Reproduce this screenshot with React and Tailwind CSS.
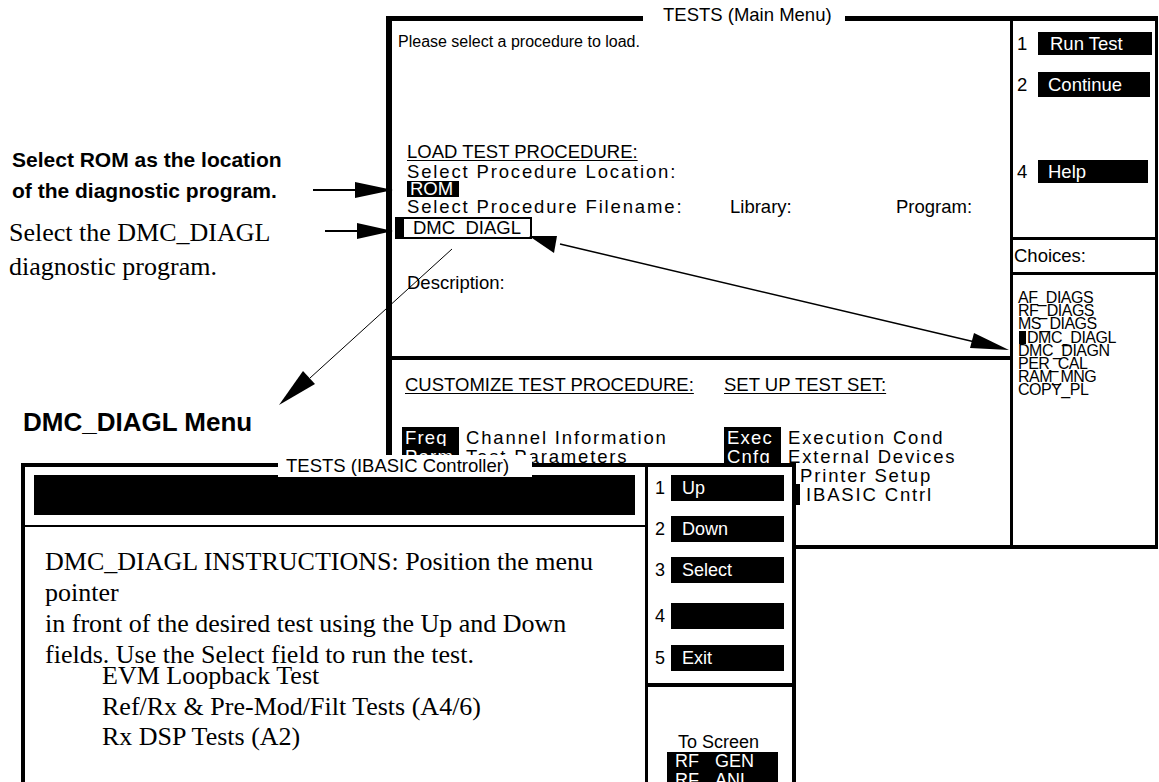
import React from 'react'

const SANS = "font-['Liberation_Sans',Arial,sans-serif]"
const SERIF = "font-['Liberation_Serif','Times_New_Roman',serif]"

const choices = ['AF_DIAGS', 'RF_DIAGS', 'MS_DIAGS', 'DMC_DIAGL', 'DMC_DIAGN', 'PER_CAL', 'RAM_MNG', 'COPY_PL']

const Label = ({ children, wide }) => (
  <span
    className={`${wide ? 'w-[76px]' : 'w-[57px]'} h-[21px] shrink-0 bg-black text-white pl-[3px] leading-[21px] tracking-[1.2px]`}
  >
    {children}
  </span>
)

const Row = ({ label, text, wide, gap = 'ml-[7px]' }) => (
  <div className="h-[19px] flex items-center">
    <Label wide={wide}>{label}</Label>
    <span className={`${gap} tracking-[1.85px] whitespace-nowrap`}>{text}</span>
  </div>
)

const MainMenu = () => (
  <div className="absolute left-[386px] top-[16px] w-[772px] h-[533px] border-l-[6px] border-t-[5px] border-r-[3px] border-b-[4px] border-black flex text-[18.5px]">
    <div className="w-[618px] flex flex-col">
      {/* load section */}
      <div className="h-[339px] shrink-0 border-b-4 border-black flex flex-col pl-[15px]">
        <p className="-ml-[9px] mt-[11px] text-[16px] leading-[20px]">Please select a procedure to load.</p>
        <p className="mt-[90px] leading-[20px]">
          <span className="underline underline-offset-2 decoration-1">LOAD TEST PROCEDURE:</span>
        </p>
        <p className="leading-[20px] tracking-[1.85px]">Select Procedure Location:</p>
        <div className="-mt-[1px] h-[16px] w-[52px] bg-black text-white leading-[16px] pl-[3px]">ROM</div>
        <div className="flex leading-[19px]">
          <span className="w-[323px] tracking-[1.85px] whitespace-nowrap">Select Procedure Filename:</span>
          <span className="w-[166px]">Library:</span>
          <span>Program:</span>
        </div>
        <div className="mt-[1px] -ml-[12px] w-[137px] h-[22px] flex border-2 border-black">
          <div className="w-[7px] bg-black" />
          <span className="ml-[9px] leading-[18px]">DMC_DIAGL</span>
        </div>
        <p className="mt-[34px] leading-[20px]">Description:</p>
      </div>
      {/* customize section */}
      <div className="flex-1 flex flex-col pt-[14px]">
        <div className="flex leading-[22px]">
          <span className="ml-[13px] w-[319px]">
            <span className="underline underline-offset-2 decoration-1">CUSTOMIZE TEST PROCEDURE:</span>
          </span>
          <span className="underline underline-offset-2 decoration-1">SET UP TEST SET:</span>
        </div>
        <div className="mt-[32px] flex">
          <div className="ml-[10px] w-[322px] flex flex-col">
            <Row label="Freq" text="Channel Information" />
            <Row label="Parm" text="Test Parameters" />
          </div>
          <div className="flex flex-col">
            <Row label="Exec" text="Execution Cond" />
            <Row label="Cnfg" text="External Devices" />
            <Row label="Prnt" text="Printer Setup" gap="ml-[19px]" />
            <Row label="IBAS" text="IBASIC Cntrl" wide gap="ml-[6px]" />
          </div>
        </div>
      </div>
    </div>
    {/* softkeys */}
    <div className="flex-1 border-l-[3px] border-black flex flex-col">
      <div className="h-[216px] shrink-0 flex flex-col">
        <div className="mt-[11px] h-[23px] flex items-center">
          <span className="w-[25px] pl-[4px]">1</span>
          <span className="w-[114px] h-[23px] bg-black text-white pl-[12px] leading-[23px]">Run Test</span>
        </div>
        <div className="mt-[17px] h-[25px] flex items-center">
          <span className="w-[25px] pl-[4px]">2</span>
          <span className="w-[112px] h-[25px] bg-black text-white pl-[10px] leading-[25px]">Continue</span>
        </div>
        <div className="mt-[63px] h-[23px] flex items-center">
          <span className="w-[25px] pl-[4px]">4</span>
          <span className="w-[110px] h-[23px] bg-black text-white pl-[10px] leading-[23px]">Help</span>
        </div>
      </div>
      <div className="h-[38px] shrink-0 border-y-[3px] border-black flex items-center pl-[1px]">Choices:</div>
      <div className="pt-[16px] flex flex-col text-[16px] tracking-[-0.5px] leading-[13.2px]">
        {choices.map((c) =>
          c === 'DMC_DIAGL' ? (
            <div key={c} className="flex items-center">
              <span className="ml-[6px] w-[7px] h-[13px] bg-black" />
              <span className="ml-[1px]">{c}</span>
            </div>
          ) : (
            <div key={c} className="pl-[5px]">{c}</div>
          )
        )}
      </div>
    </div>
  </div>
)

const IbasicWindow = () => (
  <div className="absolute left-[21px] top-[463px] w-[775px] h-[330px] bg-white border-l-4 border-t-4 border-r-4 border-black flex">
    <div className="w-[620px] flex flex-col">
      <div className="h-[60px] shrink-0 border-b-2 border-black pt-[8px] pl-[9px]">
        <div className="w-[601px] h-[40px] bg-black" />
      </div>
      <div className={`${SERIF} pt-[19px] pl-[20px] text-[26px] leading-[31px] whitespace-nowrap`}>
        <p>DMC_DIAGL INSTRUCTIONS: Position the menu</p>
        <p>pointer</p>
        <p>in front of the desired test using the Up and Down</p>
        <p>fields. Use the Select field to run the test.</p>
        <div className="-mt-[9px] ml-[57px] leading-[30.5px]">
          <p>EVM Loopback Test</p>
          <p>Ref/Rx &amp; Pre-Mod/Filt Tests (A4/6)</p>
          <p>Rx DSP Tests (A2)</p>
        </div>
      </div>
    </div>
    <div className="flex-1 border-l-[3px] border-black flex flex-col text-[18px]">
      <div className="h-[220px] shrink-0 border-b-4 border-black flex flex-col">
        {[
          ['1', 'Up', 'mt-[8px]'],
          ['2', 'Down', 'mt-[15px]'],
          ['3', 'Select', 'mt-[15px]'],
          ['4', '', 'mt-[20px]'],
          ['5', 'Exit', 'mt-[16px]'],
        ].map(([n, t, m]) => (
          <div key={n} className={`${m} h-[26px] flex items-center`}>
            <span className="w-[23px] pl-[7px]">{n}</span>
            <span className="w-[113px] h-[26px] bg-black text-white pl-[11px] leading-[26px]">{t}</span>
          </div>
        ))}
      </div>
      <div className="pt-[46px] flex flex-col leading-[19px]">
        <p className="pl-[30px]">To Screen</p>
        <div className="ml-[19px] w-[111px] bg-black text-white pl-[8px]">
          <p className="flex"><span className="w-[40px]">RF</span>GEN</p>
          <p className="flex"><span className="w-[40px]">RF</span>ANL</p>
        </div>
      </div>
    </div>
  </div>
)

const Arrows = () => (
  <svg className="absolute left-0 top-0 pointer-events-none" width="1159" height="782" viewBox="0 0 1159 782">
    <line x1="313" y1="190" x2="357" y2="190" stroke="black" strokeWidth="2" />
    <polygon points="393,190 355,182 355,198" fill="black" />
    <line x1="325" y1="231" x2="358" y2="231" stroke="black" strokeWidth="2" />
    <polygon points="393,231 357,223 357,239" fill="black" />
    <line x1="560" y1="244" x2="975" y2="342" stroke="black" strokeWidth="1.5" />
    <polygon points="529,236 557,236 554,253" fill="black" />
    <polygon points="1009,350 970,348 974,333" fill="black" />
    <line x1="452" y1="249" x2="310" y2="378" stroke="black" strokeWidth="1" />
    <polygon points="279,405 303,371 315,384" fill="black" />
  </svg>
)

export default function App() {
  return (
    <div className={`${SANS} relative w-[1159px] h-[782px] overflow-hidden bg-white text-black`}>
      <MainMenu />
      <div className="absolute left-[643px] top-[4px] w-[202px] h-[22px] bg-white pl-[20px] text-[18.5px] leading-[22px] whitespace-nowrap">
        TESTS (Main Menu)
      </div>

      <div className="absolute left-[12px] top-[144px] text-[21px] font-bold leading-[31px] whitespace-nowrap">
        <p>Select ROM as the location</p>
        <p>of the diagnostic program.</p>
      </div>
      <div className={`${SERIF} absolute left-[9px] top-[216px] text-[26px] leading-[34px] whitespace-nowrap`}>
        <p>Select the DMC_DIAGL</p>
        <p>diagnostic program.</p>
      </div>
      <div className="absolute left-[23px] top-[407px] text-[26px] font-bold leading-[30px] whitespace-nowrap">
        DMC_DIAGL Menu
      </div>

      <Arrows />

      <IbasicWindow />
      <div className="absolute left-[278px] top-[455px] w-[254px] h-[22px] bg-white pl-[8px] text-[18.5px] leading-[22px] whitespace-nowrap">
        TESTS (IBASIC Controller)
      </div>
    </div>
  )
}
